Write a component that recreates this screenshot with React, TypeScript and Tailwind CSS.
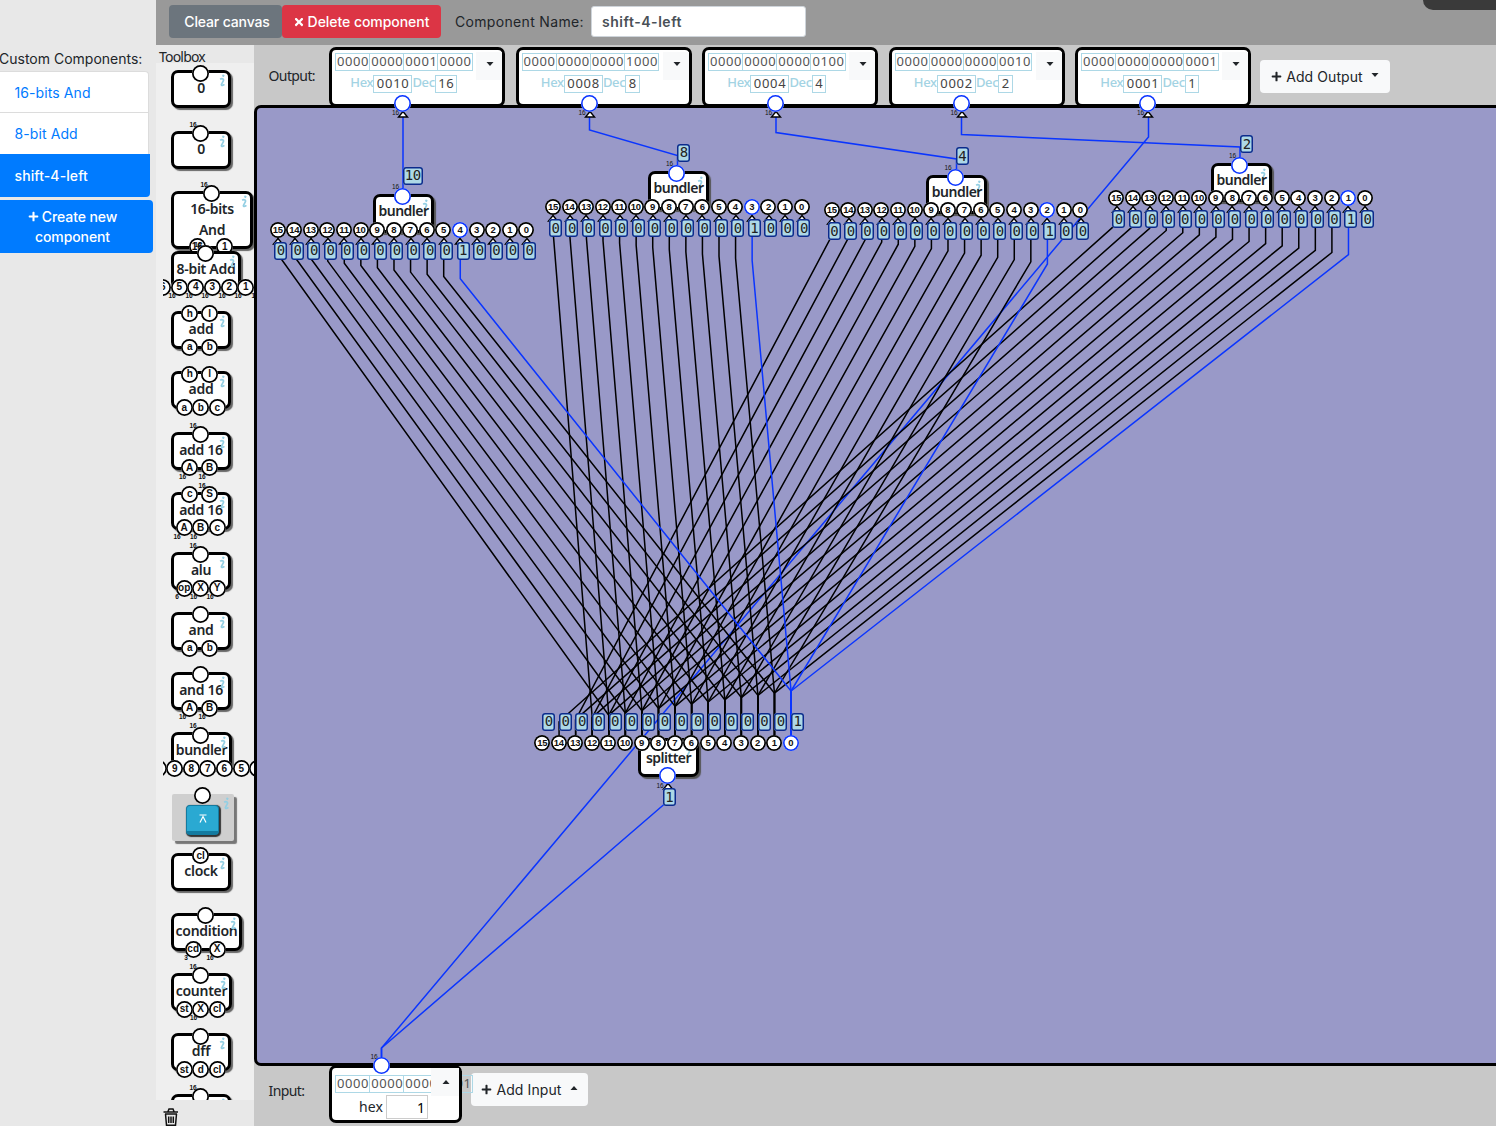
import React from "react";
import { FaPlus, FaTimes } from "react-icons/fa";

const UI = "font-['Inter',sans-serif]";
const NODE = "font-['Noto_Sans','Open_Sans',sans-serif]";
const PIN = "font-['Liberation_Sans',Arial,sans-serif]";
const MONO = "font-['DejaVu_Sans_Mono',monospace]";

function Pin({ x, y, label = "", blue = false, d = 17 }: { x: number; y: number; label?: string; blue?: boolean; d?: number }) {
  return (
    <div
      className={`absolute flex items-center justify-center rounded-full bg-white font-bold leading-none text-[#111] ${PIN} ${blue ? "shadow-[inset_0_0_0_1.6px_#0a35ff]" : "shadow-[inset_0_0_0_1.7px_#000]"} ${d > 16 ? "text-[10px]" : "text-[9.5px] tracking-[-0.3px]"}`}
      style={{ left: x - d / 2 - 0.3, top: y - d / 2 - 0.3, width: d, height: d }}
    >
      {label}
    </div>
  );
}

function Tag({ x, y, text = "16", bold = false }: { x: number; y: number; text?: string; bold?: boolean }) {
  return (
    <div
      className={`absolute w-3 text-center text-[6.5px] leading-[8px] text-[#111] ${PIN} ${bold ? "font-bold" : ""}`}
      style={{ left: x - 6, top: y - 4 }}
    >
      {text}
    </div>
  );
}

function Info({ className = "" }: { className?: string }) {
  return (
    <svg className={`absolute h-[13px] w-[7px] ${className}`} viewBox="0 0 7 13" fill="none" stroke="#93cfe3" strokeWidth="1.7">
      <path d="M3.4 1.2 L5.2 2.4" strokeWidth="2" />
      <path d="M1.2 5.4 C2.5 4.2 5.400 4.600 4.300 6.800 L2.400 10.400 C2.200 12 4.400 11.400 5.400 10.400" />
    </svg>
  );
}

function Value({ x, y, text }: { x: number; y: number; text: string }) {
  return (
    <div
      className={`absolute flex h-[18px] items-center justify-center rounded-[3px] bg-[#add8e6] pb-px text-[14px] leading-none tracking-[-0.5px] text-[#222] shadow-[inset_0_0_0_1.5px_#0c2a8c] ${MONO} ${text.length > 1 ? "w-5" : "w-[13px]"}`}
      style={{ left: x - 0.7, top: y - 0.4 }}
    >
      {text}
    </div>
  );
}

type ToolPin = [number, string];
type ToolTag = [number, number, string];
type Tool = { name: string; w: number; h?: number; top: ToolPin[]; bottom?: ToolPin[]; tags?: ToolTag[]; key3d?: boolean };

const one: ToolPin[] = [[30, ""]];
const tools: Tool[] = [
  { name: "0", w: 60, top: one },
  { name: "0", w: 60, top: one, tags: [[22, -6, "16"]] },
  { name: "16-bits And", w: 82, h: 58, top: [[40.5, ""]], bottom: [[26.5, "16"], [54, "1"]], tags: [[33, -6, "16"], [27, 54, "16"]] },
  {
    name: "8-bit Add", w: 70, top: [[34.5, ""]],
    bottom: [[-8, "6"], [8.5, "5"], [25, "4"], [41.5, "3"], [58.5, "2"], [75, "1"]],
    tags: [[1, 45, "16"], [18, 45, "16"], [34, 45, "16"], [51, 45, "16"], [67, 45, "16"], [84, 45, "16"]],
  },
  { name: "add", w: 60, top: [[19, "h"], [39, "l"]], bottom: [[19, "a"], [39, "b"]] },
  { name: "add", w: 60, top: [[19, "h"], [39, "l"]], bottom: [[13.5, "a"], [30, "b"], [46.5, "c"]] },
  { name: "add 16", w: 60, top: one, bottom: [[19, "A"], [39, "B"]], tags: [[22, -6, "16"], [11.5, 45, "16"], [31, 45, "16"]] },
  { name: "add 16", w: 60, top: [[19, "c"], [39, "S"]], bottom: [[13.5, "A"], [30, "B"], [46.5, "c"]], tags: [[31, -6, "16"], [6, 45, "16"], [22.5, 45, "16"]] },
  { name: "alu", w: 60, top: one, bottom: [[13.5, "op"], [30, "X"], [46.5, "Y"]], tags: [[22, -6, "16"], [6, 45, "6"], [22.5, 45, "16"], [39, 45, "16"]] },
  { name: "and", w: 60, top: one, bottom: [[19, "a"], [39, "b"]] },
  { name: "and 16", w: 60, top: one, bottom: [[19, "A"], [39, "B"]], tags: [[11.5, 45, "16"], [31, 45, "16"]] },
  { name: "bundler", w: 61, top: one, bottom: [[-12.5, ""], [4, "9"], [20.5, "8"], [37, "7"], [53.5, "6"], [70.5, "5"], [87, ""]], tags: [[22, -6, "16"]] },
  { name: "key", w: 64, top: [[31.5, ""]], key3d: true },
  { name: "clock", w: 60, top: [[30, "cl"]] },
  { name: "condition", w: 71, top: [[34.5, ""]], bottom: [[22.5, "cd"], [46.5, "X"]], tags: [[15, 45, "3"], [39, 45, "16"]] },
  { name: "counter", w: 61, top: one, bottom: [[13.5, "st"], [30, "X"], [46.5, "cl"]], tags: [[22, -6, "16"], [22.5, 45, "16"]] },
  { name: "dff", w: 60, top: one, bottom: [[13.5, "st"], [30, "d"], [46.5, "cl"]] },
  { name: "", w: 60, top: one, tags: [[22, -6, "16"]] },
];

function ToolItem({ t }: { t: Tool }) {
  const h = t.h ?? 38;
  return (
    <div className="h-[60.2px] shrink-0">
      <div className="relative" style={{ width: t.w, height: h }}>
        {t.key3d ? (
          <div className="absolute left-px top-px h-[47px] w-[62px] rounded-[2px] bg-[#cfcfcf] pt-[11px] shadow-[3px_3px_1px_#777]">
            <div className="ml-[14px] flex h-[30px] w-[33px] justify-center rounded-[4px] border border-b-[4px] border-[#147ba0] bg-[#2aa9d2] shadow-[1px_1px_1px_1px_#333]">
              <svg className="mt-[7px] h-3 w-2.5" viewBox="0 0 10 12" fill="none" stroke="white" strokeWidth="1.2">
                <path d="M1.5 2 H8.500 M2 9.500 L5 3.500 L8 9.500" />
              </svg>
            </div>
          </div>
        ) : (
          <div
            className={`flex h-full items-center justify-center rounded-[7px] border-[3px] border-black bg-white text-center text-[14px] font-semibold leading-[21px] tracking-[-0.3px] text-[#212529] shadow-[2px_2px_1px_#666] ${NODE}`}
          >
            <span className={t.h ? "-mt-px px-3" : "whitespace-nowrap pb-[3px]"}>{t.name}</span>
          </div>
        )}
        <Info className="right-[5px] top-1" />
        {t.top.map(([x, l], i) => <Pin key={i} x={x} y={3} label={l} />)}
        {t.bottom?.map(([x, l], i) => <Pin key={i} x={x} y={t.h ? 56.5 : 36.5} label={l} />)}
        {t.tags?.map(([x, y, s], i) => <Tag key={i} x={x} y={y} text={s} bold />)}
      </div>
    </div>
  );
}

const PITCH = 16.57;
type Bundle = { x0: number; y: number; bx: number; shift: number; kink: number; off: number; top: number; cx: number };
const bundles: Bundle[] = [
  { x0: 278, y: 230, bx: 373, shift: 4, kink: 278.7, off: 3, top: 194.4, cx: 403 },
  { x0: 553.3, y: 207.5, bx: 648, shift: 3, kink: 260.5, off: 2.3, top: 171.4, cx: 677 },
  { x0: 832, y: 210.5, bx: 926.4, shift: 2, kink: 264, off: 2.3, top: 175, cx: 955.5 },
  { x0: 1116.5, y: 198.5, bx: 1211, shift: 1, kink: 254.7, off: 2.5, top: 163, cx: 1240 },
];
const SPLIT_X = 542.5;
const bits = Array.from({ length: 16 }, (_, i) => 15 - i);

function Wires() {
  const wires: { d: string; blue: boolean }[] = [];
  bundles.forEach((b) => {
    for (let i = 15; i >= b.shift; i--) {
      const s = i - b.shift;
      const tx = b.x0 + (15 - i) * PITCH;
      const sx = SPLIT_X + (15 - s) * PITCH;
      wires.push({ d: `M${tx} ${b.y + 8} V${b.kink - s * 2.2} L${sx} ${691 + s * 2.2} V736`, blue: s === 0 });
    }
  });
  wires.sort((a, b) => Number(a.blue) - Number(b.blue));
  const long = [
    "M403 116 V192",
    "M589.5 116 V130 L677.500 155.500 V170",
    "M776 116 V132.500 L956.500 159 V172",
    "M961.5 116 V134.500 L1240 147 V160",
    "M1148.5 116 V137 L381.500 1048 V1062",
    "M668 784 V801 L381.500 1048 V1062",
  ];
  return (
    <svg className="absolute left-0 top-0 h-[1126px] w-[1496px]" viewBox="0 0 1496 1126" fill="none" strokeWidth="1.5">
      {long.map((d) => <path key={d} d={d} stroke="#0a35ff" />)}
      {wires.map((w, i) => <path key={i} d={w.d} stroke={w.blue ? "#0a35ff" : "#000"} />)}
    </svg>
  );
}

function Arrow({ x, y }: { x: number; y: number }) {
  return (
    <svg className="absolute h-[7px] w-3" style={{ left: x - 6, top: y }} viewBox="0 0 12 7">
      <path d="M6 0.500 L10.500 6 H1.500 Z" fill="white" stroke="black" strokeWidth="1.4" />
    </svg>
  );
}

function NodeBox({ x, y, name, infoClass = "right-0.5 top-0.5", pad }: { x: number; y: number; name: string; infoClass?: string; pad: string }) {
  return (
    <div
      className={`absolute flex h-[39px] w-[61px] justify-center rounded-[7px] border-[3px] border-black bg-white text-[14px] font-semibold leading-[21px] tracking-[-0.5px] text-[#212529] shadow-[2px_2px_1px_#555] ${pad} ${NODE}`}
      style={{ left: x, top: y }}
    >
      <Info className={infoClass} />
      <span className="relative">{name}</span>
    </div>
  );
}

function Diagram() {
  const outX = [403, 589.5, 776, 961.5, 1148];
  return (
    <div className="pointer-events-none absolute left-0 top-0 h-[1126px] w-[1496px] overflow-hidden">
      <Wires />
      {bundles.map((b) => (
        <React.Fragment key={b.shift}>
          <NodeBox x={b.bx} y={b.top} name="bundler" pad="pt-[3px]" />
          <Tag x={b.cx - 7.5} y={b.top - 7} />
          <Pin x={b.cx} y={b.top + 2.5} blue />
          {bits.map((n, k) => (
            <React.Fragment key={n}>
              <Arrow x={b.x0 + k * PITCH} y={b.y + 7.5} />
              <Pin x={b.x0 + k * PITCH} y={b.y} label={String(n)} blue={n === b.shift} d={16} />
              <Value x={b.x0 + k * PITCH + b.off - 6} y={b.y + 12} text={n === b.shift ? "1" : "0"} />
            </React.Fragment>
          ))}
        </React.Fragment>
      ))}
      <Value x={403.500} y={167} text="10" />
      <Value x={678} y={144} text="8" />
      <Value x={956.5} y={147.500} text="4" />
      <Value x={1241} y={135.500} text="2" />
      <NodeBox x={638} y={738.4} name="splitter" pad="pt-[6px]" infoClass="right-1 top-1" />
      {bits.map((n, k) => (
        <React.Fragment key={n}>
          <Pin x={SPLIT_X + k * PITCH} y={743.3} label={String(n)} blue={n === 0} d={16} />
          <Value x={SPLIT_X + k * PITCH + 0.5} y={713} text={n === 0 ? "1" : "0"} />
        </React.Fragment>
      ))}
      <Arrow x={668} y={783} />
      <Tag x={660} y={785.5} />
      <Pin x={667.8} y={776} blue />
      <Value x={663.5} y={788.500} text="1" />
      {outX.map((x) => (
        <React.Fragment key={x}>
          <Arrow x={x} y={111} />
          <Tag x={x - 7.5} y={113} />
          <Pin x={x} y={103.5} blue />
        </React.Fragment>
      ))}
      <Tag x={374} y={1057} />
      <Pin x={381.5} y={1066} blue />
    </div>
  );
}

function Caret({ up = false }: { up?: boolean }) {
  return (
    <svg className="h-1 w-2" viewBox="0 0 8 4">
      <path d={up ? "M0.500 4 L4 0 L7.500 4 Z" : "M0.500 0 L4 4 L7.500 0 Z"} fill="#212529" />
    </svg>
  );
}

function Bits({ groups }: { groups: string[] }) {
  return (
    <div className={`flex h-[18px] w-[137.500px] shrink-0 border border-[#add8e6] text-[13px] leading-[14px] text-[#555] ${NODE}`}>
      {groups.map((g, i) => (
        <div key={i} className={`flex-1 whitespace-nowrap pl-px tracking-[0.6px] ${i ? "border-l border-[#add8e6]" : ""}`}>{g}</div>
      ))}
    </div>
  );
}

const outputs = [
  { bits: ["0000", "0000", "0001", "0000"], hex: "0010", dec: "16" },
  { bits: ["0000", "0000", "0000", "1000"], hex: "0008", dec: "8" },
  { bits: ["0000", "0000", "0000", "0100"], hex: "0004", dec: "4" },
  { bits: ["0000", "0000", "0000", "0010"], hex: "0002", dec: "2" },
  { bits: ["0000", "0000", "0000", "0001"], hex: "0001", dec: "1" },
];

function OutputCard({ o }: { o: (typeof outputs)[number] }) {
  return (
    <div className="flex h-[60px] w-[176px] shrink-0 justify-between rounded-[7px] border-[3px] border-black bg-white pl-[3px] pt-[3px]">
      <div>
        <Bits groups={o.bits} />
        <div className={`mt-1 flex justify-center text-[13px] leading-[15px] ${NODE}`}>
          <span className="font-medium tracking-[-0.3px] text-[#a3d3e3]">Hex</span>
          <span className="h-[18px] border border-[#add8e6] pl-[2.500px] pr-0.5 tracking-[0.7px] text-[#444]">{o.hex}</span>
          <span className="font-medium tracking-[-0.3px] text-[#a3d3e3]">Dec</span>
          <span className="h-[18px] border border-[#add8e6] pl-[2.500px] pr-0.5 tracking-[0.5px] text-[#444]">{o.dec}</span>
        </div>
      </div>
      <div className="-mt-px flex h-7 w-[26px] items-center justify-center bg-[#f8f9fa] pb-1 pl-0.5">
        <Caret />
      </div>
    </div>
  );
}

export default function App() {
  return (
    <div className={`relative flex h-[1126px] w-[1496px] overflow-hidden bg-[#c8c8c8] text-[14px] text-[#212529] ${UI}`}>
      <aside className="w-[156px] shrink-0 bg-[#e8e8e8] pt-12">
        <div className="-ml-px h-[23px] whitespace-nowrap leading-[21px] tracking-0">Custom Components:</div>
        <ul className="w-[149px] tracking-[0.1px] text-[#007bff]">
          <li className="h-[42px] rounded-tr border border-l-0 border-[#dcdcdc] bg-white pl-[14.500px] leading-[42px]">16-bits And</li>
          <li className="h-[41px] border-r border-[#dcdcdc] bg-white pl-[14.500px] leading-[42px]">8-bit Add</li>
          <li className="h-[43px] w-[150px] rounded-br bg-[#007bff] pl-[14.500px] font-medium leading-[44px] text-white">shift-4-left</li>
        </ul>
        <button className="mt-[3px] h-[53px] w-[153px] rounded-r bg-[#007bff] pr-2 text-center font-medium leading-5 tracking-[-0.1px] text-white">
          <FaPlus className="mr-[3px] inline h-[11px] w-[11px] -translate-y-px" />Create new<br />component
        </button>
      </aside>

      <div className="flex min-w-0 flex-1 flex-col">
        <header className="relative flex h-[45px] shrink-0 items-center bg-[#999] pl-[13px]">
          <button className="mb-0.5 h-[33px] w-[113px] rounded bg-[#6c757d] pl-[3px] font-medium tracking-[-0.15px] text-white">Clear canvas</button>
          <button className="mb-0.5 flex h-[33px] w-[159px] items-center justify-center rounded bg-[#dc3545] font-medium tracking-[-0.05px] text-white">
            <FaTimes className="mr-1 h-3 w-2.5" />Delete component
          </button>
          <label className="mb-0.5 ml-[14px] w-[136px] whitespace-nowrap tracking-[0.33px]">Component Name:</label>
          <div className="mb-0.5 h-[31px] w-[215px] rounded-[3px] border border-[#ced4da] bg-white pl-2.5 font-semibold leading-[29px] tracking-[0.53px] text-[#495057]">shift-4-left</div>
          <div className="absolute right-0 top-0 h-2.5 w-[73px] rounded-bl-[14px] bg-[#3a3a3a]" />
        </header>

        <div className="flex min-h-0 flex-1">
          <nav className="flex w-[98px] shrink-0 flex-col bg-[#e8e8e8]">
            <h2 className={`h-[18px] shrink-0 pl-[3px] text-[14px] leading-[23px] tracking-[-0.8px] ${NODE}`}>Toolbox</h2>
            <div className="min-h-0 flex-1 bg-[#efefef] pl-[7px]">
              <div className="flex h-[1037px] flex-col overflow-hidden pl-2 pt-[7.400px]">
                {tools.map((t, i) => <ToolItem key={i} t={t} />)}
              </div>
            </div>
            <div className="h-[26px] shrink-0 pl-[7px] pt-2">
              <svg className="h-[18px] w-4" viewBox="0 0 16 18" fill="none" stroke="#111" strokeWidth="1.5">
                <path d="M0.500 4 H15 M5 3.500 L6 1 H10 L11 3.500 M2 6 H14 M2.500 6 L3.500 17.200 H12.500 L13.500 6 M5.700 8.500 V15 M8 8.500 V15 M10.300 8.500 V15" />
              </svg>
            </div>
          </nav>

          <main className="flex min-w-0 flex-1 flex-col overflow-hidden">
            <section className="flex h-[60px] shrink-0 items-start pl-[14.500px] pt-0.5">
              <span className={`w-[60.500px] shrink-0 pt-[18px] leading-[22px] tracking-[-0.6px] ${NODE}`}>Output:</span>
              <div className="flex gap-[10.500px]">
                {outputs.map((o) => <OutputCard key={o.hex} o={o} />)}
              </div>
              <button className="ml-[9px] mt-[13px] flex h-[33px] w-[130px] shrink-0 items-center justify-center rounded bg-[#f8f9fa] tracking-[0.08px]">
                <FaPlus className="mr-1 h-[11px] w-[11px]" />Add Output<span className="-mt-1 ml-2"><Caret /></span>
              </button>
            </section>
            <section className="h-[961px] w-[1260px] shrink-0 rounded-l-[7px] border-[3px] border-black bg-[#9999c8]" />
            <section className="-mt-px flex h-[60px] shrink-0 items-start pl-[14.500px]">
              <span className={`w-[60.500px] shrink-0 pt-[15px] leading-[22px] tracking-[-0.6px] ${NODE}`}>Input:</span>
              <div className="h-[58px] w-[133px] shrink-0 rounded-[7px] border-[3px] border-black bg-white pl-[3px] pt-[7px]">
                <div className="relative w-[137px]">
                  <Bits groups={["0000", "0000", "0000", "0001"]} />
                  <div className="absolute -top-[7px] left-[96px] flex h-[28px] w-[28px] items-center justify-center bg-[#f8f9fa] pl-0.5"><Caret up /></div>
                  <div className="absolute -top-1 left-[124px] h-6 w-[3px] bg-black" />
                </div>
                <div className="mt-0.5 flex pl-[24px] leading-[23px] tracking-[0.1px]">
                  <span className={`w-[27px] ${NODE}`}>hex</span>
                  <span className={`h-6 w-[42px] border border-[#ccc] pr-0.5 text-right text-black ${NODE}`}>1</span>
                </div>
              </div>
              <button className="ml-[9px] mt-[8px] flex h-[33px] w-[117px] shrink-0 items-center justify-center rounded bg-[#f8f9fa] tracking-[0.1px]">
                <FaPlus className="mr-1 h-[11px] w-[11px]" />Add Input<span className="-mt-1 ml-2"><Caret up /></span>
              </button>
            </section>
          </main>
        </div>
      </div>
      <Diagram />
    </div>
  );
}
